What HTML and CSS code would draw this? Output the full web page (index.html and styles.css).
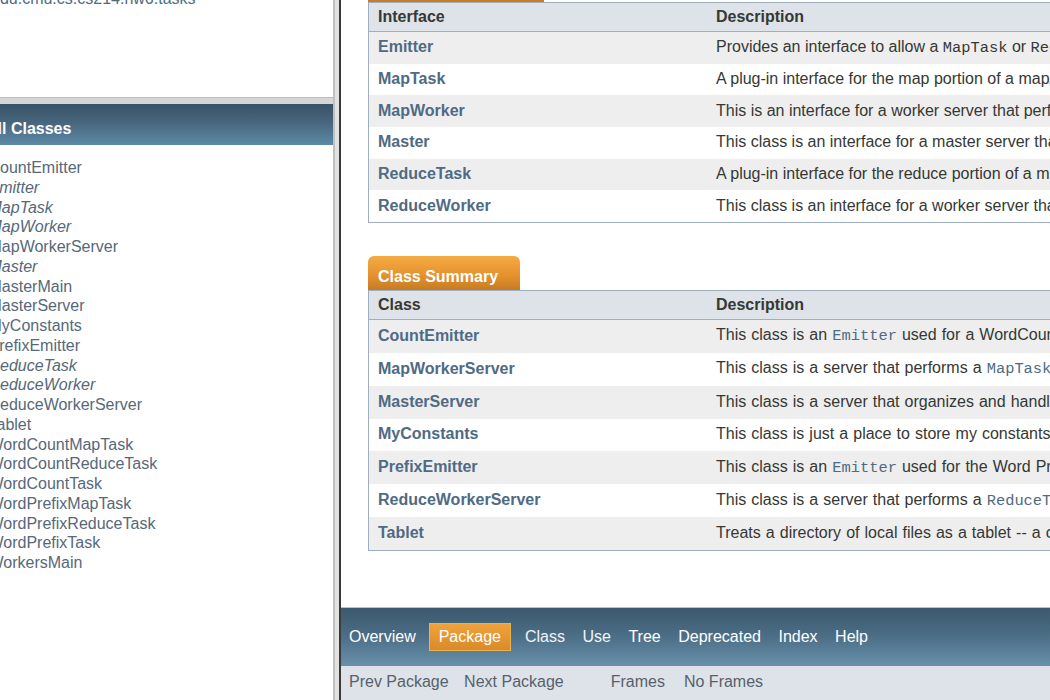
FILE: index.html
```html
<!DOCTYPE html>
<html lang="en">
<head>
<meta charset="utf-8">
<title>edu.cmu.cs.cs214.hw6.tasks</title>
<link rel="stylesheet" href="styles.css">
</head>
<body>
<div class="frameset">
  <div class="left">
    <div class="pkg-frame">
      <div class="pkg-title"><a href="#">edu.cmu.cs.cs214.hw6.tasks</a></div>
    </div>
    <div class="hsplit"></div>
    <div class="classes-frame">
      <h1 class="bar">All Classes</h1>
      <ul class="class-list">
        <li><a href="#">CountEmitter</a></li>
        <li><a href="#" class="iface">Emitter</a></li>
        <li><a href="#" class="iface">MapTask</a></li>
        <li><a href="#" class="iface">MapWorker</a></li>
        <li><a href="#">MapWorkerServer</a></li>
        <li><a href="#" class="iface">Master</a></li>
        <li><a href="#">MasterMain</a></li>
        <li><a href="#">MasterServer</a></li>
        <li><a href="#">MyConstants</a></li>
        <li><a href="#">PrefixEmitter</a></li>
        <li><a href="#" class="iface">ReduceTask</a></li>
        <li><a href="#" class="iface">ReduceWorker</a></li>
        <li><a href="#">ReduceWorkerServer</a></li>
        <li><a href="#">Tablet</a></li>
        <li><a href="#">WordCountMapTask</a></li>
        <li><a href="#">WordCountReduceTask</a></li>
        <li><a href="#">WordCountTask</a></li>
        <li><a href="#">WordPrefixMapTask</a></li>
        <li><a href="#">WordPrefixReduceTask</a></li>
        <li><a href="#">WordPrefixTask</a></li>
        <li><a href="#">WorkersMain</a></li>
      </ul>
    </div>
  </div>
  <div class="vsplit"></div>
  <div class="right">
    <div class="content">
      <div class="summary summary-iface">
        <div class="caption"><span>Interface Summary</span></div>
        <table>
          <colgroup><col class="c1"><col></colgroup>
          <thead><tr><th>Interface</th><th class="desc">Description</th></tr></thead>
          <tbody>
            <tr class="alt"><td class="name"><a href="#">Emitter</a></td><td class="desc">Provides an interface to allow a <code>MapTask</code> or <code>ReduceTask</code> to emit key/value pairs.</td></tr>
            <tr><td class="name"><a href="#">MapTask</a></td><td class="desc">A plug-in interface for the map portion of a map/reduce computation.</td></tr>
            <tr class="alt"><td class="name"><a href="#">MapWorker</a></td><td class="desc">This is an interface for a worker server that performs map tasks.</td></tr>
            <tr><td class="name"><a href="#">Master</a></td><td class="desc">This class is an interface for a master server that coordinates workers.</td></tr>
            <tr class="alt"><td class="name"><a href="#">ReduceTask</a></td><td class="desc">A plug-in interface for the reduce portion of a map/reduce computation.</td></tr>
            <tr><td class="name"><a href="#">ReduceWorker</a></td><td class="desc">This class is an interface for a worker server that performs reduce tasks.</td></tr>
          </tbody>
        </table>
      </div>
      <div class="summary summary-class">
        <div class="caption"><span>Class Summary</span></div>
        <table>
          <colgroup><col class="c1"><col></colgroup>
          <thead><tr><th>Class</th><th class="desc">Description</th></tr></thead>
          <tbody>
            <tr class="alt"><td class="name"><a href="#">CountEmitter</a></td><td class="desc">This class is an <code><a href="#">Emitter</a></code> used for a WordCount task.</td></tr>
            <tr><td class="name"><a href="#">MapWorkerServer</a></td><td class="desc">This class is a server that performs a <code><a href="#">MapTask</a></code> on request.</td></tr>
            <tr class="alt"><td class="name"><a href="#">MasterServer</a></td><td class="desc">This class is a server that organizes and handles map/reduce jobs.</td></tr>
            <tr><td class="name"><a href="#">MyConstants</a></td><td class="desc">This class is just a place to store my constants.</td></tr>
            <tr class="alt"><td class="name"><a href="#">PrefixEmitter</a></td><td class="desc">This class is an <code><a href="#">Emitter</a></code> used for the Word Prefix task.</td></tr>
            <tr><td class="name"><a href="#">ReduceWorkerServer</a></td><td class="desc">This class is a server that performs a <code><a href="#">ReduceTask</a></code> on request.</td></tr>
            <tr class="alt"><td class="name"><a href="#">Tablet</a></td><td class="desc">Treats a directory of local files as a tablet -- a collection of key/value pairs.</td></tr>
          </tbody>
        </table>
      </div>
    </div>
    <div class="bottom-nav">
      <ul class="top-nav">
        <li><a href="#">Overview</a></li>
        <li class="nav-active">Package</li>
        <li>Class</li>
        <li>Use</li>
        <li><a href="#">Tree</a></li>
        <li><a href="#">Deprecated</a></li>
        <li><a href="#">Index</a></li>
        <li><a href="#">Help</a></li>
      </ul>
      <div class="sub-nav">
        <ul class="sub-list">
          <li><a href="#">Prev Package</a></li>
          <li><a href="#">Next Package</a></li>
        </ul>
        <ul class="sub-list frames">
          <li><a href="#">Frames</a></li>
          <li><a href="#">No Frames</a></li>
        </ul>
      </div>
    </div>
  </div>
</div>
</body>
</html>
```

FILE: styles.css
```css
html, body {
  margin: 0;
  height: 700px;
  overflow: hidden;
}

body {
  font-family: "Liberation Sans", Arial, sans-serif;
  font-size: 16px;
  background: #ffffff;
  color: #353833;
}

a {
  color: #4f6a84;
  text-decoration: none;
}

code {
  font-family: "Liberation Mono", "Courier New", monospace;
  font-size: 15.4px;
}

.frameset {
  display: flex;
  height: 700px;
}

/* ---------- left frames ---------- */
.left {
  width: 333px;
  flex: none;
  display: flex;
  flex-direction: column;
  overflow: hidden;
  background: #ffffff;
}

.pkg-frame {
  height: 97px;
  flex: none;
  overflow: hidden;
}

.pkg-title {
  margin: -11px 0 0 -9px;
  line-height: 19px;
  white-space: nowrap;
}

.hsplit {
  height: 7px;
  flex: none;
  box-sizing: border-box;
  background: #d6d6d6;
  border-top: 1px solid #bdbdbd;
}

.classes-frame {
  flex: 1;
  overflow: hidden;
}

.bar {
  margin: 0;
  height: 41px;
  box-sizing: border-box;
  padding: 15px 0 0 0;
  text-indent: -14px;
  font-size: 16px;
  line-height: 19px;
  font-weight: bold;
  color: #ffffff;
  white-space: nowrap;
  background: linear-gradient(#3a5266, #47667d 45%, #5d8aa6);
}

.class-list {
  list-style: none;
  margin: 0 0 0 -11.5px;
  padding: 13px 0 0 0;
}

.class-list li {
  line-height: 19.75px;
  white-space: nowrap;
}

.class-list a {
  color: #56687a;
}

.class-list .iface {
  font-style: italic;
}

.vsplit {
  width: 8px;
  flex: none;
  background: linear-gradient(to right, #c0c0c0 0, #c0c0c0 2px, #e2e2e2 2px, #e2e2e2 6px, #3a3a3a 6px, #3a3a3a 8px);
}

/* ---------- right frame ---------- */
.right {
  flex: 1;
  min-width: 0;
  display: flex;
  flex-direction: column;
  overflow: hidden;
  background: #ffffff;
}

.content {
  padding-left: 27px;
}

.summary {
  width: 1100px;
}

.summary-iface {
  margin-top: -32px;
}

.summary-class {
  margin-top: 33px;
}

.caption {
  display: flex;
}

.caption span {
  height: 34px;
  box-sizing: border-box;
  padding: 11px 22px 0 10px;
  line-height: 19px;
  font-weight: bold;
  color: #ffffff;
  white-space: nowrap;
  border-radius: 6px 6px 0 0;
  background: linear-gradient(#f5aa42, #e5942f 55%, #c67b22);
}

.summary table {
  width: 100%;
  table-layout: fixed;
  border-collapse: separate;
  border-spacing: 0;
  border: 1px solid #9eadc0;
}

.summary col.c1 {
  width: 337px;
}

.summary th {
  height: 28px;
  padding: 0 0 0 9px;
  text-align: left;
  font-weight: bold;
  color: #353833;
  background: #dee3e9;
  border-bottom: 1px solid #9eadc0;
  white-space: nowrap;
}

.summary td {
  padding: 0 0 1px 9px;
  vertical-align: middle;
  white-space: nowrap;
  overflow: hidden;
}

.summary .desc {
  padding-left: 10px;
}

.summary td.name a {
  font-weight: bold;
}

.summary-iface tbody tr {
  height: 31.67px;
}

.summary-class tbody tr {
  height: 32.86px;
}

.summary-class td.desc {
  word-spacing: 0.6px;
}

.summary tr.alt td {
  background: #eeeeef;
}

/* ---------- bottom navigation ---------- */
.bottom-nav {
  margin-top: auto;
  flex: none;
}

.top-nav {
  list-style: none;
  margin: 0;
  height: 59px;
  box-sizing: border-box;
  padding: 0 0 0 8px;
  display: flex;
  align-items: center;
  gap: 17.5px;
  color: #f2f5f8;
  border-top: 1px solid #b6c4cf;
  background: linear-gradient(#3c596e, #4a6c84 45%, #6890aa);
  white-space: nowrap;
}

.top-nav a {
  color: #ffffff;
}

.top-nav .nav-active {
  height: 28px;
  box-sizing: border-box;
  padding: 0 9px;
  margin: 0 -3.5px 0 -4.5px;
  display: flex;
  align-items: center;
  color: #ffffff;
  background: linear-gradient(#f2a23b, #d98a2a);
  border: 1px solid #e9b350;
}

.sub-nav {
  height: 34px;
  box-sizing: border-box;
  padding: 6px 0 0 8px;
  display: flex;
  line-height: 19px;
  background: #dee3e9;
  white-space: nowrap;
}

.sub-list {
  list-style: none;
  margin: 0;
  padding: 0;
  display: flex;
  gap: 15.5px;
}

.sub-list a {
  color: #56616c;
}

.sub-list.frames {
  margin-left: 47px;
  gap: 19px;
}
```
